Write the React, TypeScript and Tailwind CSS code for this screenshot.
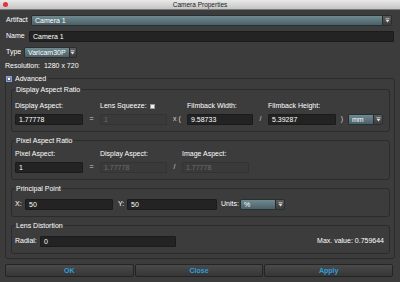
import React from "react";

const Caret = () => (
  <svg width="5" height="5" viewBox="0 0 5 5">
    <rect x="0.5" y="0.4" width="4" height="0.9" fill="#e0e0e0" />
    <path d="M0.6 2.1 L4.4 2.1 L2.5 4.4 Z" fill="#e0e0e0" />
  </svg>
);

function Combo({ value, className = "" }: { value: string; className?: string }) {
  return (
    <div className={`flex h-[11px] rounded-[2px] border border-[#263034] overflow-hidden ${className}`}>
      <div className="flex-1 bg-linear-to-b from-[#6f8a92] to-[#4c6167] px-[3px] text-[7px] leading-[9px] text-white">
        {value}
      </div>
      <div className="w-[9px] bg-linear-to-b from-[#5c5c5c] to-[#3c3c3c] border-l border-[#2a2a2a] flex items-center justify-center">
        <Caret />
      </div>
    </div>
  );
}

function Field({ value, disabled = false, className = "" }: { value: string; disabled?: boolean; className?: string }) {
  const look = disabled
    ? "bg-[#3a3a3a] border-[#333333] text-[#6c6c6c]"
    : "bg-[#232323] border-[#1b1b1b] text-white";
  return (
    <div className={`h-[11px] rounded-[1px] border px-[3px] text-[7px] leading-[9px] ${look} ${className}`}>{value}</div>
  );
}

function Group({ title, children, className = "" }: { title: string; children: React.ReactNode; className?: string }) {
  return (
    <fieldset className={`border border-[#2b2b2b] rounded-[3px] ml-[5px] mr-[4px] ${className}`}>
      <legend className="ml-[3px] px-[1px] text-[7px] leading-[9px] text-white">{title}</legend>
      {children}
    </fieldset>
  );
}

const Sep = ({ t }: { t: string }) => (
  <div className="h-[11px] flex items-center justify-center text-[7px] text-[#d4d4d4]">{t}</div>
);

const Label = ({ t, className = "" }: { t: string; className?: string }) => (
  <div className={`h-[8px] text-[7px] leading-[8px] text-white ${className}`}>{t}</div>
);

export default function App() {
  return (
    <div className="w-[400px] h-[282px] bg-[#3c3c3c] flex flex-col font-['Liberation_Sans',Arial,sans-serif] overflow-hidden">
      {/* title bar */}
      <div className="relative h-[10px] bg-linear-to-b from-[#e9e9e9] to-[#c4c4c4] border-b border-[#7a7a7a] flex items-center justify-center">
        <div className="absolute left-[3px] top-[2px] w-[5px] h-[5px] rounded-full bg-[#e2323c]" />
        <span className="text-[6.5px] leading-[9px] text-[#222222]">Camera Properties</span>
      </div>

      <div className="mt-[5px] flex items-center pl-[6px] pr-[8px]">
        <span className="w-[25px] text-[7px] text-white">Artifact</span>
        <Combo value="Camera 1" className="flex-1" />
      </div>

      <div className="mt-[5px] flex items-center pl-[6px] pr-[6px]">
        <span className="w-[23px] text-[7px] text-white">Name</span>
        <Field value="Camera 1" className="flex-1" />
      </div>

      <div className="mt-[5px] flex items-center pl-[6px]">
        <span className="w-[18px] text-[7px] text-white">Type</span>
        <Combo value="Varicam30P" className="w-[53px]" />
      </div>

      <div className="mt-[4px] pl-[5px] h-[8px] text-[7px] leading-[8px] text-white whitespace-pre">
        Resolution:  1280 x 720
      </div>

      <fieldset className="mt-[4px] mx-[5px] border border-[#2b2b2b] rounded-[3px] pb-[4px]">
        <legend className="flex items-center gap-[3px] text-[7px] leading-[9px] text-white pr-[2px]">
          <span className="w-[6px] h-[6px] border border-[#8aa0c8] bg-linear-to-b from-[#7d93bd] to-[#4e6494] flex items-center justify-center">
            <span className="w-[2px] h-[2px] bg-white" />
          </span>
          Advanced
        </legend>

        <Group title="Display Aspect Ratio" className="mt-[2px]">
          <div className="pl-[3px] pt-[8px] pb-[6px] grid grid-cols-[68px_17px_67px_20px_66px_15px_68px_12px_35px] gap-y-[4px]">
            <Label t="Display Aspect:" />
            <div />
            <div className="flex items-center gap-[3px]">
              <Label t="Lens Squeeze:" />
              <span className="w-[5px] h-[5px] bg-[#f0f0f0] border border-[#999]" />
            </div>
            <div />
            <Label t="Filmback Width:" />
            <div />
            <Label t="Filmback Height:" />
            <div />
            <div />

            <Field value="1.77778" />
            <Sep t="=" />
            <Field value="1" disabled />
            <Sep t="x (" />
            <Field value="9.58733" />
            <Sep t="/" />
            <Field value="5.39287" />
            <Sep t=")" />
            <Combo value="mm" />
          </div>
        </Group>

        <Group title="Pixel Aspect Ratio" className="mt-[4px]">
          <div className="pl-[3px] pt-[5px] pb-[6px] grid grid-cols-[68px_17px_67px_15px_67px] gap-y-[4px]">
            <Label t="Pixel Aspect:" />
            <div />
            <Label t="Display Aspect:" />
            <div />
            <Label t="Image Aspect:" />

            <Field value="1" />
            <Sep t="=" />
            <Field value="1.77778" disabled />
            <Sep t="/" />
            <Field value="1.77778" disabled />
          </div>
        </Group>

        <Group title="Principal Point" className="mt-[4px]">
          <div className="pl-[3px] pt-[6px] pb-[6px] flex items-center text-[7px] text-white">
            <span className="w-[10px]">X:</span>
            <Field value="50" className="w-[88px]" />
            <span className="w-[14px] pl-[5px]">Y:</span>
            <Field value="50" className="w-[90px]" />
            <span className="w-[19px] ml-[4px]">Units:</span>
            <Combo value="%" className="w-[45px]" />
          </div>
        </Group>

        <Group title="Lens Distortion" className="mt-[4px]">
          <div className="pl-[3px] pr-[5px] pt-[6px] pb-[6px] flex items-center text-[7px] text-white">
            <span className="w-[25px]">Radial:</span>
            <Field value="0" className="w-[136px]" />
            <div className="flex-1" />
            <span>Max. value: 0.759644</span>
          </div>
        </Group>
      </fieldset>

      <div className="mt-[5px] ml-[5px] mr-[7px] flex gap-[1px]">
        {["OK", "Close", "Apply"].map((b) => (
          <button
            key={b}
            className="flex-1 h-[13px] rounded-[2px] border border-[#242424] bg-linear-to-b from-[#4a4a4a] to-[#363636] text-[7px] leading-[11px] font-bold text-[#2d9fdc]"
          >
            {b}
          </button>
        ))}
      </div>
    </div>
  );
}
